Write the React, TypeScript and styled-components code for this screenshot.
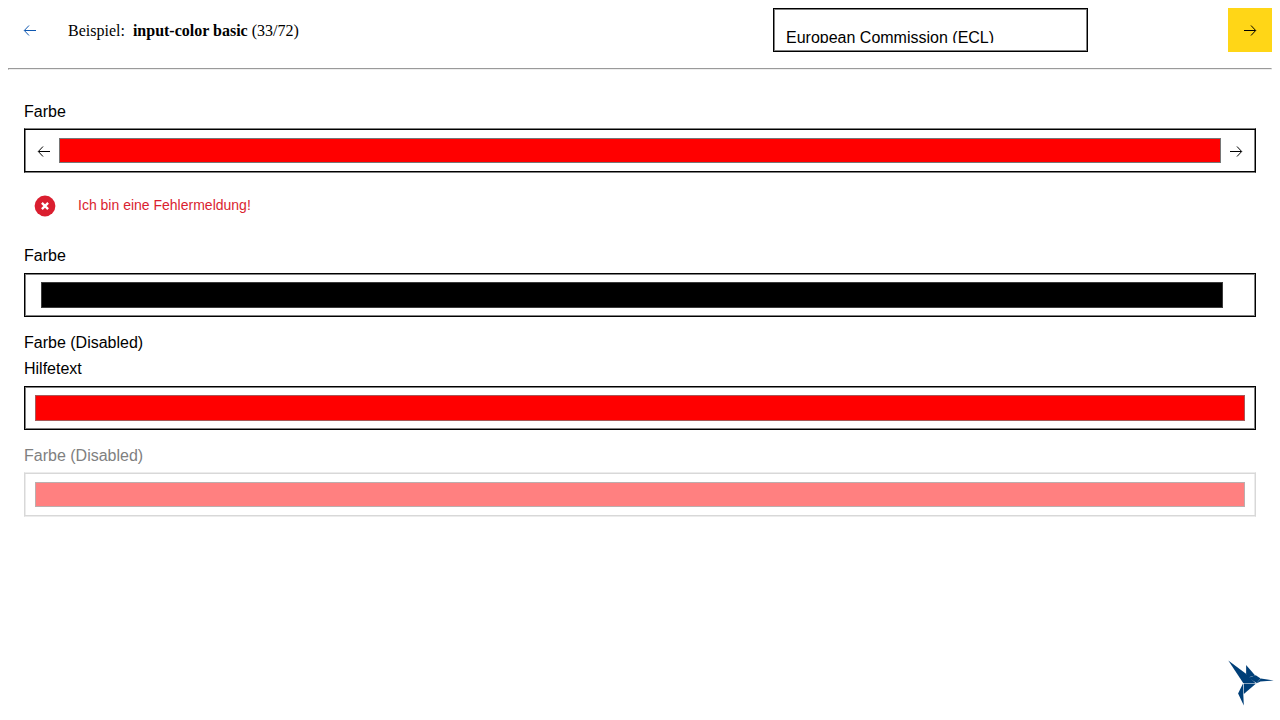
import React, { useState } from 'react';
import styled, { createGlobalStyle, css } from 'styled-components';

const GlobalStyle = createGlobalStyle`
  *, *::before, *::after { box-sizing: border-box; }
  html { background: #fff; }
  body {
    margin: 8px;
    color: #000;
    font-family: "Liberation Serif", "Times New Roman", serif;
    font-size: 16px;
  }
`;

const sans = '"Liberation Sans", Arial, sans-serif';

const Header = styled.header`
  display: grid;
  grid-template-columns: 44px minmax(0, 721fr) minmax(0, 315fr) minmax(0, 140fr) 44px;
  align-items: center;
`;

const NavButton = styled.button<{ $primary?: boolean }>`
  display: flex;
  align-items: center;
  justify-content: center;
  width: 44px;
  height: 44px;
  padding: 0;
  border: 0;
  cursor: pointer;
  color: ${(p) => (p.$primary ? '#000' : '#0e57b0')};
  background: ${(p) => (p.$primary ? '#ffd617' : 'transparent')};
`;

const NextButton = styled(NavButton)`
  grid-column: 5;
`;

const Title = styled.p`
  margin: 0;
  padding: 2px 0 0 16px;
  line-height: 18px;

  strong { margin-left: 4px; }
`;

const Separator = styled.hr`
  margin: 16px 0 0;
`;

const wholeEdge = css`
  height: 44px;
  margin-top: 4px;
  border: 1px solid #000;
  box-shadow: inset 0 0 0 1px #808080;
`;

const softEdge = css`
  height: 45px;
  margin-top: 3px;
  border: 1px solid;
  border-color: #808080 #000;
  box-shadow: inset 0 1px #000, inset 0 -1px #000, inset 1px 0 #808080, inset -1px 0 #808080;
`;

const disabledEdge = css`
  height: 45px;
  margin-top: 3px;
  border: 1px solid;
  border-color: #ececec #d8d8d8;
  box-shadow: inset 0 1px #d8d8d8, inset 0 -1px #d8d8d8, inset 1px 0 #ececec, inset -1px 0 #ececec;
`;

const edges = { whole: wholeEdge, soft: softEdge, disabled: disabledEdge };

type Edge = keyof typeof edges;

const SelectFrame = styled.div`
  ${wholeEdge}
  margin-top: 0;
  padding: 8px 12px;
`;

const SelectClip = styled.div`
  height: 26px;
  overflow: hidden;
`;

const ThemeSelect = styled.select`
  display: block;
  width: 100%;
  height: 40px;
  padding: 0;
  border: 0;
  appearance: none;
  background: transparent;
  color: #000;
  font: 16px ${sans};
`;

const Form = styled.form`
  padding: 29px 16px 0;
  font-family: ${sans};
`;

const Field = styled.div<{ $spaced?: boolean }>`
  margin-bottom: ${(p) => (p.$spaced ? '15px' : '13px')};
`;

const Label = styled.label<{ $disabled?: boolean }>`
  display: block;
  line-height: 26px;
  color: ${(p) => (p.$disabled ? '#808080' : '#000')};
`;

const Hint = styled.span`
  display: block;
  line-height: 26px;
`;

const Frame = styled.div<{ $edge: Edge; $inset: string }>`
  display: flex;
  align-items: center;
  gap: 8px;
  ${(p) => edges[p.$edge]}
  padding: ${(p) => p.$inset};
`;

const ColorInput = styled.input<{ $height: number; $line: string }>`
  flex: 1;
  min-width: 0;
  height: ${(p) => p.$height}px;
  padding: 0;
  border: 0;
  background: transparent;
  appearance: none;

  &::-webkit-color-swatch-wrapper { padding: 0; }
  &::-webkit-color-swatch {
    border: 1px solid ${(p) => p.$line};
    border-radius: 0;
  }
`;

const ErrorRow = styled.div`
  display: flex;
  align-items: center;
  gap: 22px;
  height: 44px;
  margin-top: 11px;
  padding: 0 10px;
  color: #da1e2f;
  font-size: 14px;
`;

const ErrorText = styled.span`
  padding-bottom: 2px;
  line-height: 16px;
`;

const Brand = styled.svg`
  position: fixed;
  right: 6px;
  bottom: 14px;
  width: 46px;
  height: 46px;
`;

function Arrow({ flip = false }: { flip?: boolean }) {
  return (
    <svg width="14" height="14" viewBox="0 0 14 14" fill="none" stroke="currentColor" strokeWidth="1" aria-hidden="true">
      <path d={flip ? 'M13 7.5H1.5M6 2.5 1.3 7.5 6 12.5' : 'M1 7.5h11.5M8 2.5l4.7 5L8 12.5'} />
    </svg>
  );
}

function ErrorIcon() {
  return (
    <svg width="22" height="22" viewBox="0 0 22 22" aria-hidden="true">
      <circle cx="11" cy="11" r="10.4" fill="#da1e2f" />
      <path d="m7.9 7.9 6.2 6.2m0-6.2-6.2 6.2" stroke="#fff" strokeWidth="2.3" />
    </svg>
  );
}

function Hummingbird() {
  return (
    <Brand viewBox="0 0 46 46" fill="#003f78" role="img" aria-label="KoliBri">
      <path d="M.3.5 18 13.8 27.6 23.2 15.2 22.9Z" />
      <path d="m18.1 5.1 9.1 10.4-7.3 2.1-1.8-3.6Z" />
      <path d="m20.4 17.8 7.4-2.6 4.8 3.2-4 4.7Z" />
      <path d="m32.8 18.4 13 2-13.4 1.2-4.2 1.9Z" />
      <path d="m15.7 23.4 12.1.4-12 10.3Z" />
      <path d="m15 23.5.3 10.8.5 11.3-5.7-12.2Z" />
    </Brand>
  );
}

interface ColorFieldProps {
  id: string;
  label: string;
  initial: string;
  edge: Edge;
  inset: string;
  height: number;
  line: string;
  hint?: string;
  arrows?: boolean;
  disabled?: boolean;
  error?: string;
}

function ColorField({ id, label, initial, edge, inset, height, line, hint, arrows, disabled, error }: ColorFieldProps) {
  const [value, setValue] = useState(initial);
  return (
    <Field $spaced={Boolean(error)}>
      <Label htmlFor={id} $disabled={disabled}>{label}</Label>
      {hint && <Hint id={`${id}-hint`}>{hint}</Hint>}
      <Frame $edge={edge} $inset={inset}>
        {arrows && <Arrow flip />}
        <ColorInput
          id={id}
          type="color"
          value={value}
          disabled={disabled}
          aria-describedby={hint ? `${id}-hint` : error ? `${id}-error` : undefined}
          onChange={(e) => setValue(e.target.value)}
          $height={height}
          $line={line}
        />
        {arrows && <Arrow />}
      </Frame>
      {error && (
        <ErrorRow id={`${id}-error`}>
          <ErrorIcon />
          <ErrorText>{error}</ErrorText>
        </ErrorRow>
      )}
    </Field>
  );
}

export default function App() {
  return (
    <>
      <GlobalStyle />
      <Header>
        <NavButton type="button" aria-label="Zurück"><Arrow flip /></NavButton>
        <Title>Beispiel: <strong>input-color basic</strong> (33/72)</Title>
        <SelectFrame>
          <SelectClip>
            <ThemeSelect aria-label="Theme" defaultValue="ecl">
              <option value="ecl">European Commission (ECL)</option>
            </ThemeSelect>
          </SelectClip>
        </SelectFrame>
        <NextButton type="button" aria-label="Weiter" $primary><Arrow /></NextButton>
      </Header>
      <Separator />
      <Form>
        <ColorField id="color-error" label="Farbe" initial="#ff0000" edge="soft" inset="0 12px" height={25} line="#767676" arrows error="Ich bin eine Fehlermeldung!" />
        <ColorField id="color-list" label="Farbe" initial="#000000" edge="whole" inset="0 32px 0 16px" height={26} line="#3b3b3b" />
        <ColorField id="color-hint" label="Farbe (Disabled)" hint="Hilfetext" initial="#ff0000" edge="whole" inset="0 10px" height={26} line="#a95858" />
        <ColorField id="color-disabled" label="Farbe (Disabled)" initial="#ff8080" edge="disabled" inset="0 10px" height={25} line="#bbaeae" disabled />
      </Form>
      <Hummingbird />
    </>
  );
}
